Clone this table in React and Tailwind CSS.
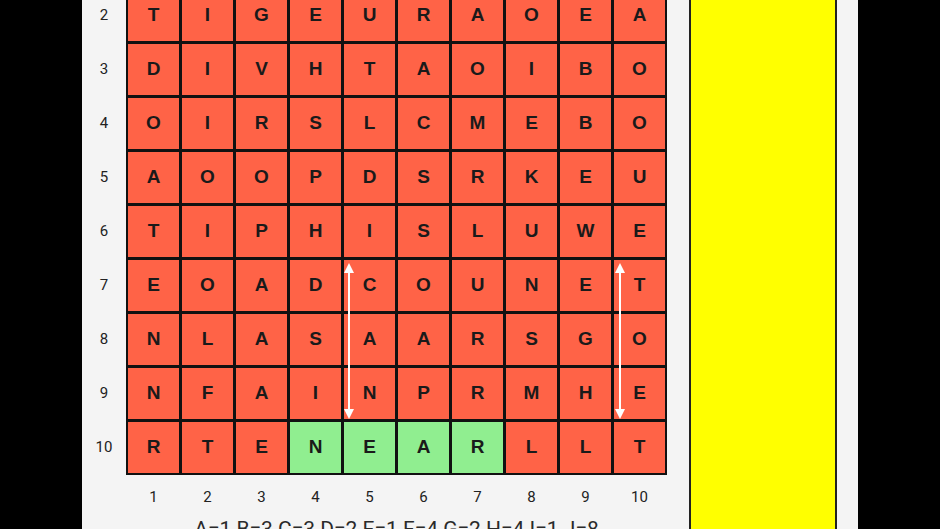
import React from "react";

const rows = [
  "SPLATWORDS",
  "TIGEURAOEA",
  "DIVHTAOIBO",
  "OIRSLCMEBO",
  "AOOPDSRKEU",
  "TIPHISLUWE",
  "EOADCOUNET",
  "NLASAARSGO",
  "NFAINPRMHE",
  "RTENEARLLT",
];

// cells that form the found word (row index, col index)
const found = new Set(["9-3", "9-4", "9-5", "9-6"]);

const legend = "A=1 B=3 C=3 D=2 E=1 F=4 G=2 H=4 I=1 J=8";

function Arrow({ x }) {
  return (
    <svg
      className="absolute pointer-events-none"
      style={{ left: x - 6, top: 329 }}
      width="12"
      height="156"
      viewBox="0 0 12 156"
    >
      <line x1="6" y1="8" x2="6" y2="148" stroke="#fff" strokeWidth="2" />
      <path d="M6 0 L11 10 L1 10 Z" fill="#fff" />
      <path d="M6 156 L11 146 L1 146 Z" fill="#fff" />
    </svg>
  );
}

export default function App() {
  return (
    <div className="w-[940px] h-[529px] bg-black overflow-hidden flex font-['Roboto',sans-serif]">
      <div className="ml-[82px] w-[776px] h-full bg-[#f4f4f4] flex">
        {/* board area */}
        <div className="flex flex-col mt-[-66px]">
          <div className="flex shrink-0">
            <div className="w-[44px] pt-[2px] flex flex-col gap-[3px]">
              {rows.map((_, i) => (
                <div
                  key={i}
                  className="h-[51px] flex items-center justify-center text-[15px] text-[#222]"
                >
                  {i + 1}
                </div>
              ))}
            </div>
            <div className="relative bg-[#111] p-[2px] grid grid-cols-10 gap-[3px]">
              {rows.map((row, r) =>
                row.split("").map((ch, c) => (
                  <div
                    key={r + "-" + c}
                    className={`w-[51px] h-[51px] flex items-center justify-center font-['Liberation_Sans',Arial,sans-serif] font-bold text-[19px] text-[#1a1a1a] ${
                      found.has(r + "-" + c) ? "bg-[#90ee90]" : "bg-[#ff6347]"
                    }`}
                  >
                    {ch}
                  </div>
                ))
              )}
              <Arrow x={223} />
              <Arrow x={494} />
            </div>
          </div>
          {/* column numbers */}
          <div className="flex shrink-0 h-[44px] items-center pl-[46px] gap-[3px]">
            {Array.from({ length: 10 }, (_, i) => (
              <div key={i} className="w-[51px] text-center text-[15px] text-[#222]">
                {i + 1}
              </div>
            ))}
          </div>
          <div className="shrink-0 pl-[44px] text-center text-[21px] leading-[21px] text-[#2a2a2a] whitespace-nowrap">
            {legend}
          </div>
        </div>

        {/* side panel */}
        <div className="ml-[22px] w-[148px] h-full bg-[#ffff00] border-x-2 border-[#222]" />
      </div>
    </div>
  );
}
